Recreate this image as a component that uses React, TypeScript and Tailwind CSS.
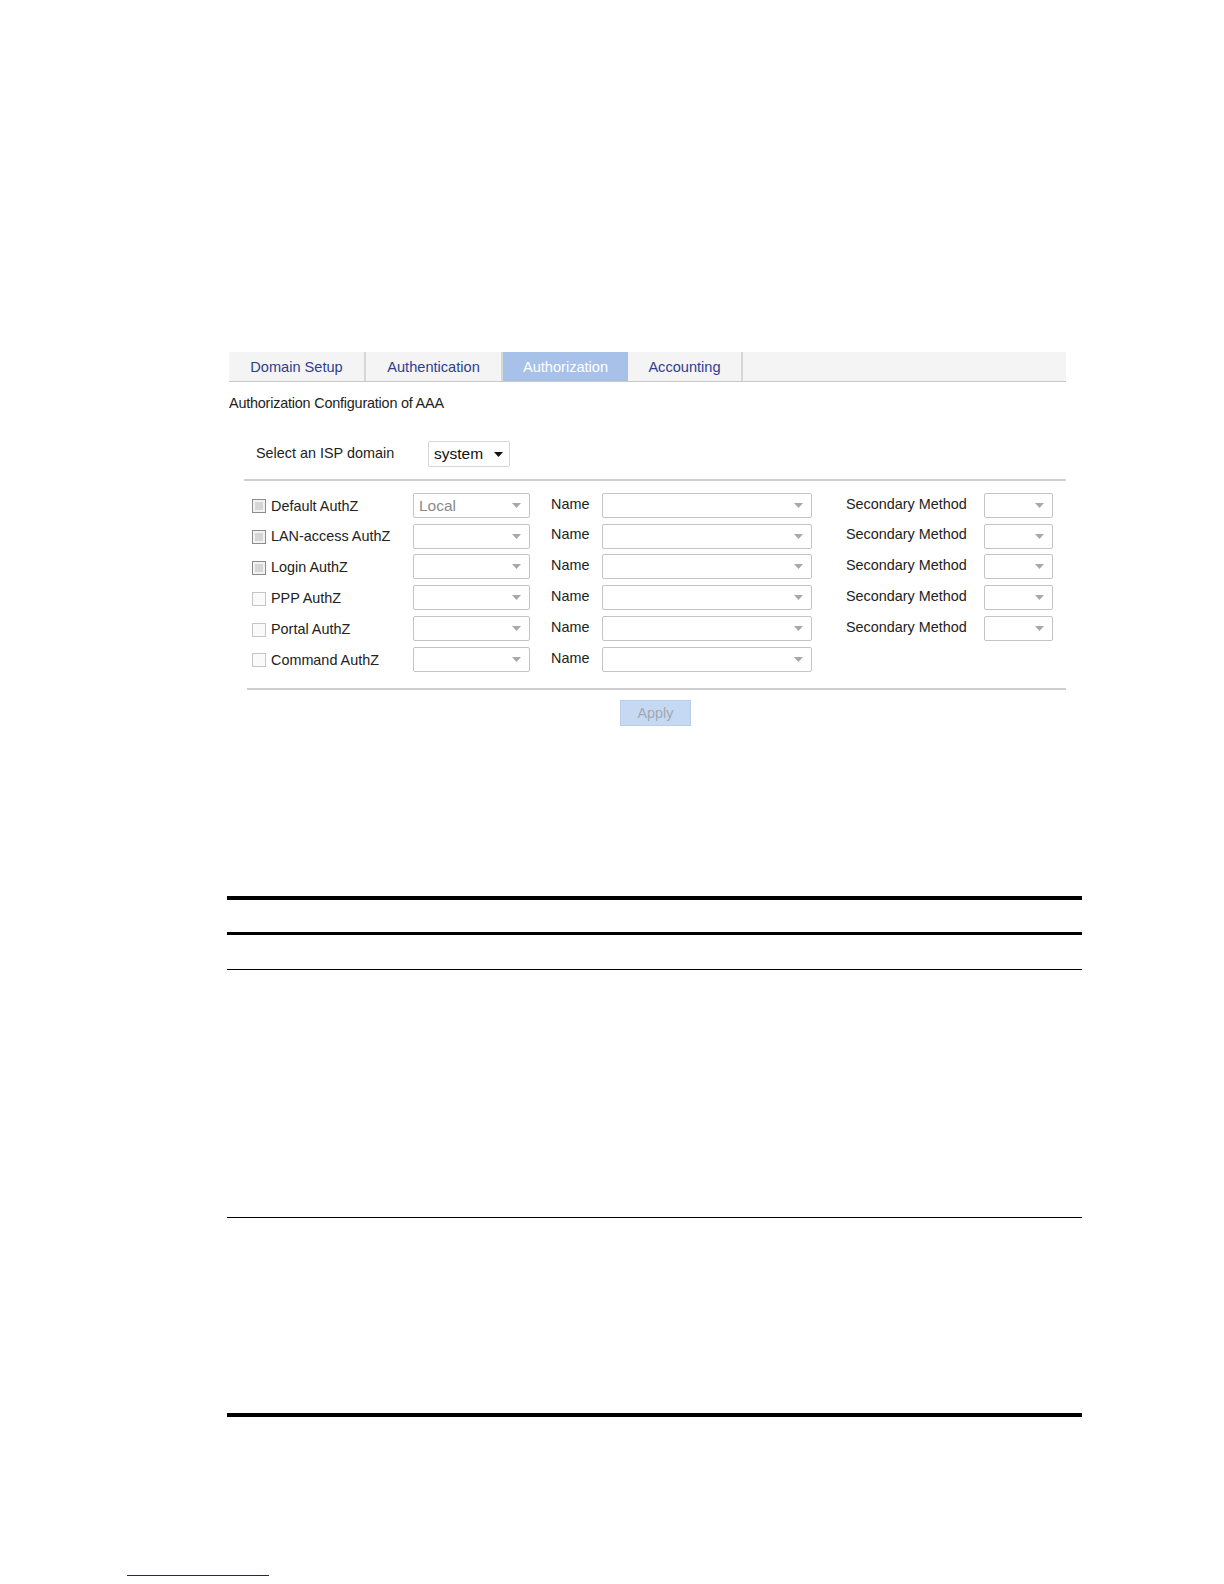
import React from "react";

type Row = {
  label: string;
  value?: string;
  checkTone: "dark" | "light";
  secondary: boolean;
};

const rows: Row[] = [
  { label: "Default AuthZ", value: "Local", checkTone: "dark", secondary: true },
  { label: "LAN-access AuthZ", checkTone: "dark", secondary: true },
  { label: "Login AuthZ", checkTone: "dark", secondary: true },
  { label: "PPP AuthZ", checkTone: "light", secondary: true },
  { label: "Portal AuthZ", checkTone: "light", secondary: true },
  { label: "Command AuthZ", checkTone: "light", secondary: false },
];

const tabs = [
  { name: "Domain Setup", w: "w-[137px]" },
  { name: "Authentication", w: "w-[137px]" },
  { name: "Authorization", w: "w-[125px]", active: true },
  { name: "Accounting", w: "w-[115px]" },
];

const Arrow = ({ dark }: { dark?: boolean }) => (
  <svg width="9" height="5" viewBox="0 0 9 5" className="flex-none">
    <path d="M0 0h9L4.5 5z" fill={dark ? "#111" : "#a8a8a8"} />
  </svg>
);

const Select: React.FC<{ w: string; value?: string }> = ({ w, value }) => (
  <div
    className={`${w} h-[25px] flex items-center justify-between pl-[5px] pr-[8px] border border-[#c4c4c4] rounded-[2px] bg-white`}
  >
    <span className="text-[15.5px] text-[#8a8a8a] leading-none">{value}</span>
    <Arrow />
  </div>
);

const Checkbox = ({ tone }: { tone: "dark" | "light" }) =>
  tone === "dark" ? (
    <div className="w-[14px] h-[14px] border border-[#8c8c8c] bg-[#f2f2f2] p-[2px] flex-none">
      <div className="w-full h-full bg-[#d6d6d6]" />
    </div>
  ) : (
    <div className="w-[14px] h-[14px] border border-[#c6c6c6] bg-[#fafafa] flex-none" />
  );

export default function App() {
  return (
    <div
      className="relative w-[1224px] h-[1584px] bg-white text-[#222] overflow-hidden"
      style={{ fontFamily: '"Liberation Sans", Arial, sans-serif' }}
    >
      <div className="pt-[352px] ml-[229px] w-[837px]">
        {/* tab strip */}
        <div className="h-[30px] flex bg-[#f4f4f4] border-b border-[#c8c8c8]">
          {tabs.map((t) =>
            t.active ? (
              <div
                key={t.name}
                className={`${t.w} flex items-center justify-center bg-[#a7c1e8] text-white text-[14.6px] pt-[3px]`}
              >
                {t.name}
              </div>
            ) : (
              <div
                key={t.name}
                className={`${t.w} flex items-center justify-center text-[#2f3f8f] text-[14.6px] pt-[3px] border-r-2 border-[#d6d6d6]`}
              >
                {t.name}
              </div>
            )
          )}
        </div>

        <div className="mt-[13px] text-[14.4px] leading-[16px] tracking-[-0.2px]">
          Authorization Configuration of AAA
        </div>

        <div className="mt-[30px] ml-[27px] flex items-center h-[26px]">
          <span className="w-[172px] text-[14.4px]">Select an ISP domain</span>
          <div className="w-[82px] h-[26px] border border-[#d6d6d6] rounded-[2px] flex items-center justify-between pl-[5px] pr-[6px]">
            <span className="text-[15.5px] text-[#111]">system</span>
            <Arrow dark />
          </div>
        </div>

        <div className="mt-[12px] ml-[15px] border-t-2 border-[#cfcfcf]" />

        <div className="mt-[9px] flex flex-col">
          {rows.map((r) => (
            <div key={r.label} className="h-[30.8px] flex items-center">
              <div className="ml-[23px] w-[161px] flex items-center gap-[5px] pt-[2px]">
                <Checkbox tone={r.checkTone} />
                <span className="text-[14.4px]">{r.label}</span>
              </div>
              <Select w="w-[117px]" value={r.value} />
              <span className="ml-[21px] w-[51px] text-[14.4px] -mt-[2px]">Name</span>
              <Select w="w-[210px]" />
              {r.secondary && (
                <>
                  <span className="ml-[34px] w-[138px] text-[14.4px] -mt-[2px]">
                    Secondary Method
                  </span>
                  <Select w="w-[69px]" />
                </>
              )}
            </div>
          ))}
        </div>

        <div className="mt-[13px] ml-[18px] border-t-2 border-[#cfcfcf]" />

        <div className="mt-[10px] ml-[391px] w-[71px] h-[26px] bg-[#c6d9f3] border border-[#b9cdea] flex items-center justify-center text-[14.4px] text-[#a0a8b4] pt-[2px]">
          Apply
        </div>
      </div>

      {/* document table rules */}
      <div className="ml-[227px] w-[855px] mt-[170px] flex flex-col">
        <div className="h-[4px] bg-black" />
        <div className="h-[32px]" />
        <div className="h-[3px] bg-black" />
        <div className="h-[34px]" />
        <div className="h-px bg-black" />
        <div className="h-[247px]" />
        <div className="h-px bg-black" />
        <div className="h-[195px]" />
        <div className="h-[4px] bg-black" />
      </div>

      <div className="ml-[127px] mt-[158px] w-[142px] h-px bg-[#1c1c96]" />
    </div>
  );
}
